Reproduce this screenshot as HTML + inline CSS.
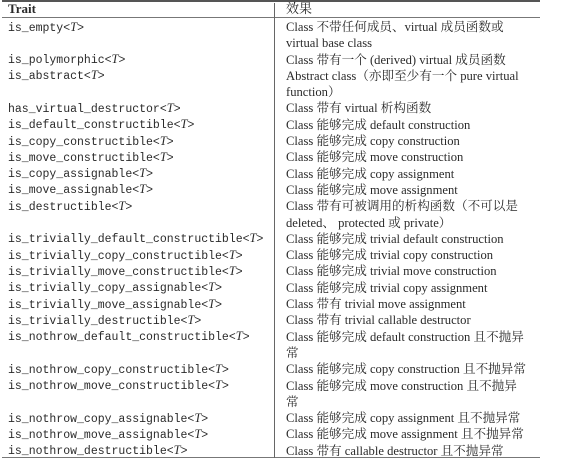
<!DOCTYPE html>
<html><head><meta charset="utf-8"><style>
body{margin:0;background:#fff;width:566px;height:474px;overflow:hidden;position:relative;font-family:"Liberation Serif","Noto Serif CJK SC",serif;color:#2a2a2a}
.tl{position:absolute;left:2px;width:538px;background:#555}
.vl{position:absolute;left:274px;top:3px;height:455px;width:1px;background:#666}
.l,.r{position:absolute;white-space:nowrap}
.l div,.r div{height:16.3px;line-height:16.3px;overflow:visible}
.l{left:8px;font-family:"Liberation Mono",monospace;font-size:11.5px}
.r{left:286px;font-size:12.6px}
i{font-family:"Liberation Serif",serif;font-style:italic;font-size:12.5px;line-height:0}
</style></head><body>
<div class="tl" style="top:0;height:2px"></div>
<div class="tl" style="top:17px;height:1px;background:#777"></div>
<div class="tl" style="top:457px;height:1px;background:#777"></div>
<div class="vl"></div>
<div style="position:absolute;left:8px;top:1px;font-weight:bold;font-size:13px;line-height:16px">Trait</div>
<div style="position:absolute;left:286px;top:1px;font-size:13px;line-height:16px">效果</div>
<div class="l" style="top:20.5px">
<div>is_empty&lt;<i>T</i>&gt;</div><div></div>
<div>is_polymorphic&lt;<i>T</i>&gt;</div>
<div>is_abstract&lt;<i>T</i>&gt;</div><div></div>
<div>has_virtual_destructor&lt;<i>T</i>&gt;</div>
<div>is_default_constructible&lt;<i>T</i>&gt;</div>
<div>is_copy_constructible&lt;<i>T</i>&gt;</div>
<div>is_move_constructible&lt;<i>T</i>&gt;</div>
<div>is_copy_assignable&lt;<i>T</i>&gt;</div>
<div>is_move_assignable&lt;<i>T</i>&gt;</div>
<div>is_destructible&lt;<i>T</i>&gt;</div><div></div>
<div>is_trivially_default_constructible&lt;<i>T</i>&gt;</div>
<div>is_trivially_copy_constructible&lt;<i>T</i>&gt;</div>
<div>is_trivially_move_constructible&lt;<i>T</i>&gt;</div>
<div>is_trivially_copy_assignable&lt;<i>T</i>&gt;</div>
<div>is_trivially_move_assignable&lt;<i>T</i>&gt;</div>
<div>is_trivially_destructible&lt;<i>T</i>&gt;</div>
<div>is_nothrow_default_constructible&lt;<i>T</i>&gt;</div><div></div>
<div>is_nothrow_copy_constructible&lt;<i>T</i>&gt;</div>
<div>is_nothrow_move_constructible&lt;<i>T</i>&gt;</div><div></div>
<div>is_nothrow_copy_assignable&lt;<i>T</i>&gt;</div>
<div>is_nothrow_move_assignable&lt;<i>T</i>&gt;</div>
<div>is_nothrow_destructible&lt;<i>T</i>&gt;</div>
</div>
<div class="r" style="top:19px">
<div>Class 不带任何成员、virtual 成员函数或</div><div>virtual base class</div>
<div>Class 带有一个 (derived) virtual 成员函数</div>
<div>Abstract class（亦即至少有一个 pure virtual</div><div>function）</div>
<div>Class 带有 virtual 析构函数</div>
<div>Class 能够完成 default construction</div>
<div>Class 能够完成 copy construction</div>
<div>Class 能够完成 move construction</div>
<div>Class 能够完成 copy assignment</div>
<div>Class 能够完成 move assignment</div>
<div>Class 带有可被调用的析构函数（不可以是</div><div>deleted、 protected 或 private）</div>
<div>Class 能够完成 trivial default construction</div>
<div>Class 能够完成 trivial copy construction</div>
<div>Class 能够完成 trivial move construction</div>
<div>Class 能够完成 trivial copy assignment</div>
<div>Class 带有 trivial move assignment</div>
<div>Class 带有 trivial callable destructor</div>
<div>Class 能够完成 default construction 且不抛异</div><div>常</div>
<div>Class 能够完成 copy construction 且不抛异常</div>
<div>Class 能够完成 move construction 且不抛异</div><div>常</div>
<div>Class 能够完成 copy assignment 且不抛异常</div>
<div>Class 能够完成 move assignment 且不抛异常</div>
<div>Class 带有 callable destructor 且不抛异常</div>
</div>
</body></html>
